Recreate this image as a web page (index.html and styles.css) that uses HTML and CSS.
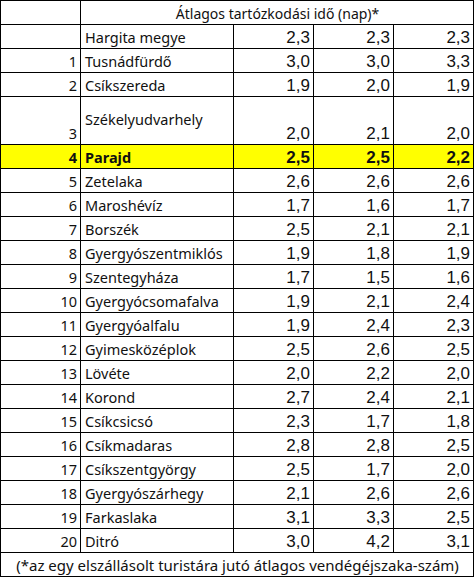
FILE: index.html
```html
<!DOCTYPE html>
<html lang="hu">
<head>
<meta charset="utf-8">
<link rel="stylesheet" href="styles.css">
</head>
<body>
<table class="sheet">
  <colgroup>
    <col class="c-rank"><col class="c-name"><col class="c-val"><col class="c-val"><col class="c-val">
  </colgroup>
  <tr class="row"><td></td><td class="head" colspan="4">Átlagos tartózkodási idő (nap)*</td></tr>
  <tr class="row"><td></td><td class="name">Hargita megye</td><td class="num">2,3</td><td class="num">2,3</td><td class="num">2,3</td></tr>
  <tr class="row"><td class="rank">1</td><td class="name">Tusnádfürdő</td><td class="num">3,0</td><td class="num">3,0</td><td class="num">3,3</td></tr>
  <tr class="row"><td class="rank">2</td><td class="name">Csíkszereda</td><td class="num">1,9</td><td class="num">2,0</td><td class="num">1,9</td></tr>
  <tr class="row tall"><td class="rank">3</td><td class="name mid">Székelyudvarhely</td><td class="num">2,0</td><td class="num">2,1</td><td class="num">2,0</td></tr>
  <tr class="row hl"><td class="rank">4</td><td class="name">Parajd</td><td class="num">2,5</td><td class="num">2,5</td><td class="num">2,2</td></tr>
  <tr class="row"><td class="rank">5</td><td class="name">Zetelaka</td><td class="num">2,6</td><td class="num">2,6</td><td class="num">2,6</td></tr>
  <tr class="row"><td class="rank">6</td><td class="name">Maroshévíz</td><td class="num">1,7</td><td class="num">1,6</td><td class="num">1,7</td></tr>
  <tr class="row"><td class="rank">7</td><td class="name">Borszék</td><td class="num">2,5</td><td class="num">2,1</td><td class="num">2,1</td></tr>
  <tr class="row"><td class="rank">8</td><td class="name">Gyergyószentmiklós</td><td class="num">1,9</td><td class="num">1,8</td><td class="num">1,9</td></tr>
  <tr class="row"><td class="rank">9</td><td class="name">Szentegyháza</td><td class="num">1,7</td><td class="num">1,5</td><td class="num">1,6</td></tr>
  <tr class="row"><td class="rank">10</td><td class="name">Gyergyócsomafalva</td><td class="num">1,9</td><td class="num">2,1</td><td class="num">2,4</td></tr>
  <tr class="row"><td class="rank">11</td><td class="name">Gyergyóalfalu</td><td class="num">1,9</td><td class="num">2,4</td><td class="num">2,3</td></tr>
  <tr class="row"><td class="rank">12</td><td class="name">Gyimesközéplok</td><td class="num">2,5</td><td class="num">2,6</td><td class="num">2,5</td></tr>
  <tr class="row"><td class="rank">13</td><td class="name">Lövéte</td><td class="num">2,0</td><td class="num">2,2</td><td class="num">2,0</td></tr>
  <tr class="row"><td class="rank">14</td><td class="name">Korond</td><td class="num">2,7</td><td class="num">2,4</td><td class="num">2,1</td></tr>
  <tr class="row"><td class="rank">15</td><td class="name">Csíkcsicsó</td><td class="num">2,3</td><td class="num">1,7</td><td class="num">1,8</td></tr>
  <tr class="row"><td class="rank">16</td><td class="name">Csíkmadaras</td><td class="num">2,8</td><td class="num">2,8</td><td class="num">2,5</td></tr>
  <tr class="row"><td class="rank">17</td><td class="name">Csíkszentgyörgy</td><td class="num">2,5</td><td class="num">1,7</td><td class="num">2,0</td></tr>
  <tr class="row"><td class="rank">18</td><td class="name">Gyergyószárhegy</td><td class="num">2,1</td><td class="num">2,6</td><td class="num">2,6</td></tr>
  <tr class="row"><td class="rank">19</td><td class="name">Farkaslaka</td><td class="num">3,1</td><td class="num">3,3</td><td class="num">2,5</td></tr>
  <tr class="row"><td class="rank">20</td><td class="name">Ditró</td><td class="num">3,0</td><td class="num">4,2</td><td class="num">3,1</td></tr>
  <tr class="row"><td class="foot" colspan="5">(*az egy elszállásolt turistára jutó átlagos vendégéjszaka-szám)</td></tr>
</table>
</body>
</html>
```
FILE: styles.css
```css
html, body {
  margin: 0;
  padding: 0;
  background: #fff;
}
.sheet {
  border-collapse: collapse;
  table-layout: fixed;
  width: 474px;
  font-family: "Noto Sans", "Open Sans", sans-serif;
  font-size: 14.5px;
  color: #111;
}
.c-rank { width: 80px; }
.c-name { width: 153px; }
.c-val { width: 80px; }
.row { height: 24px; }
.row.tall { height: 48px; }
.sheet td {
  border: 1px solid #000;
  padding: 0 3px 1px 4px;
  line-height: 19px;
  vertical-align: bottom;
  white-space: nowrap;
}
.sheet td.mid { vertical-align: middle; padding-bottom: 3px; }
.rank { text-align: right; }
.name { text-align: left; }
.head { text-align: center; font-size: 14px; }
.foot { text-align: center; font-size: 15px; }
.num {
  text-align: right;
  font-family: "Liberation Sans", Arial, sans-serif;
  font-size: 17px;
}
.row.hl td {
  background: #ffff00;
  font-weight: 700;
}
```
